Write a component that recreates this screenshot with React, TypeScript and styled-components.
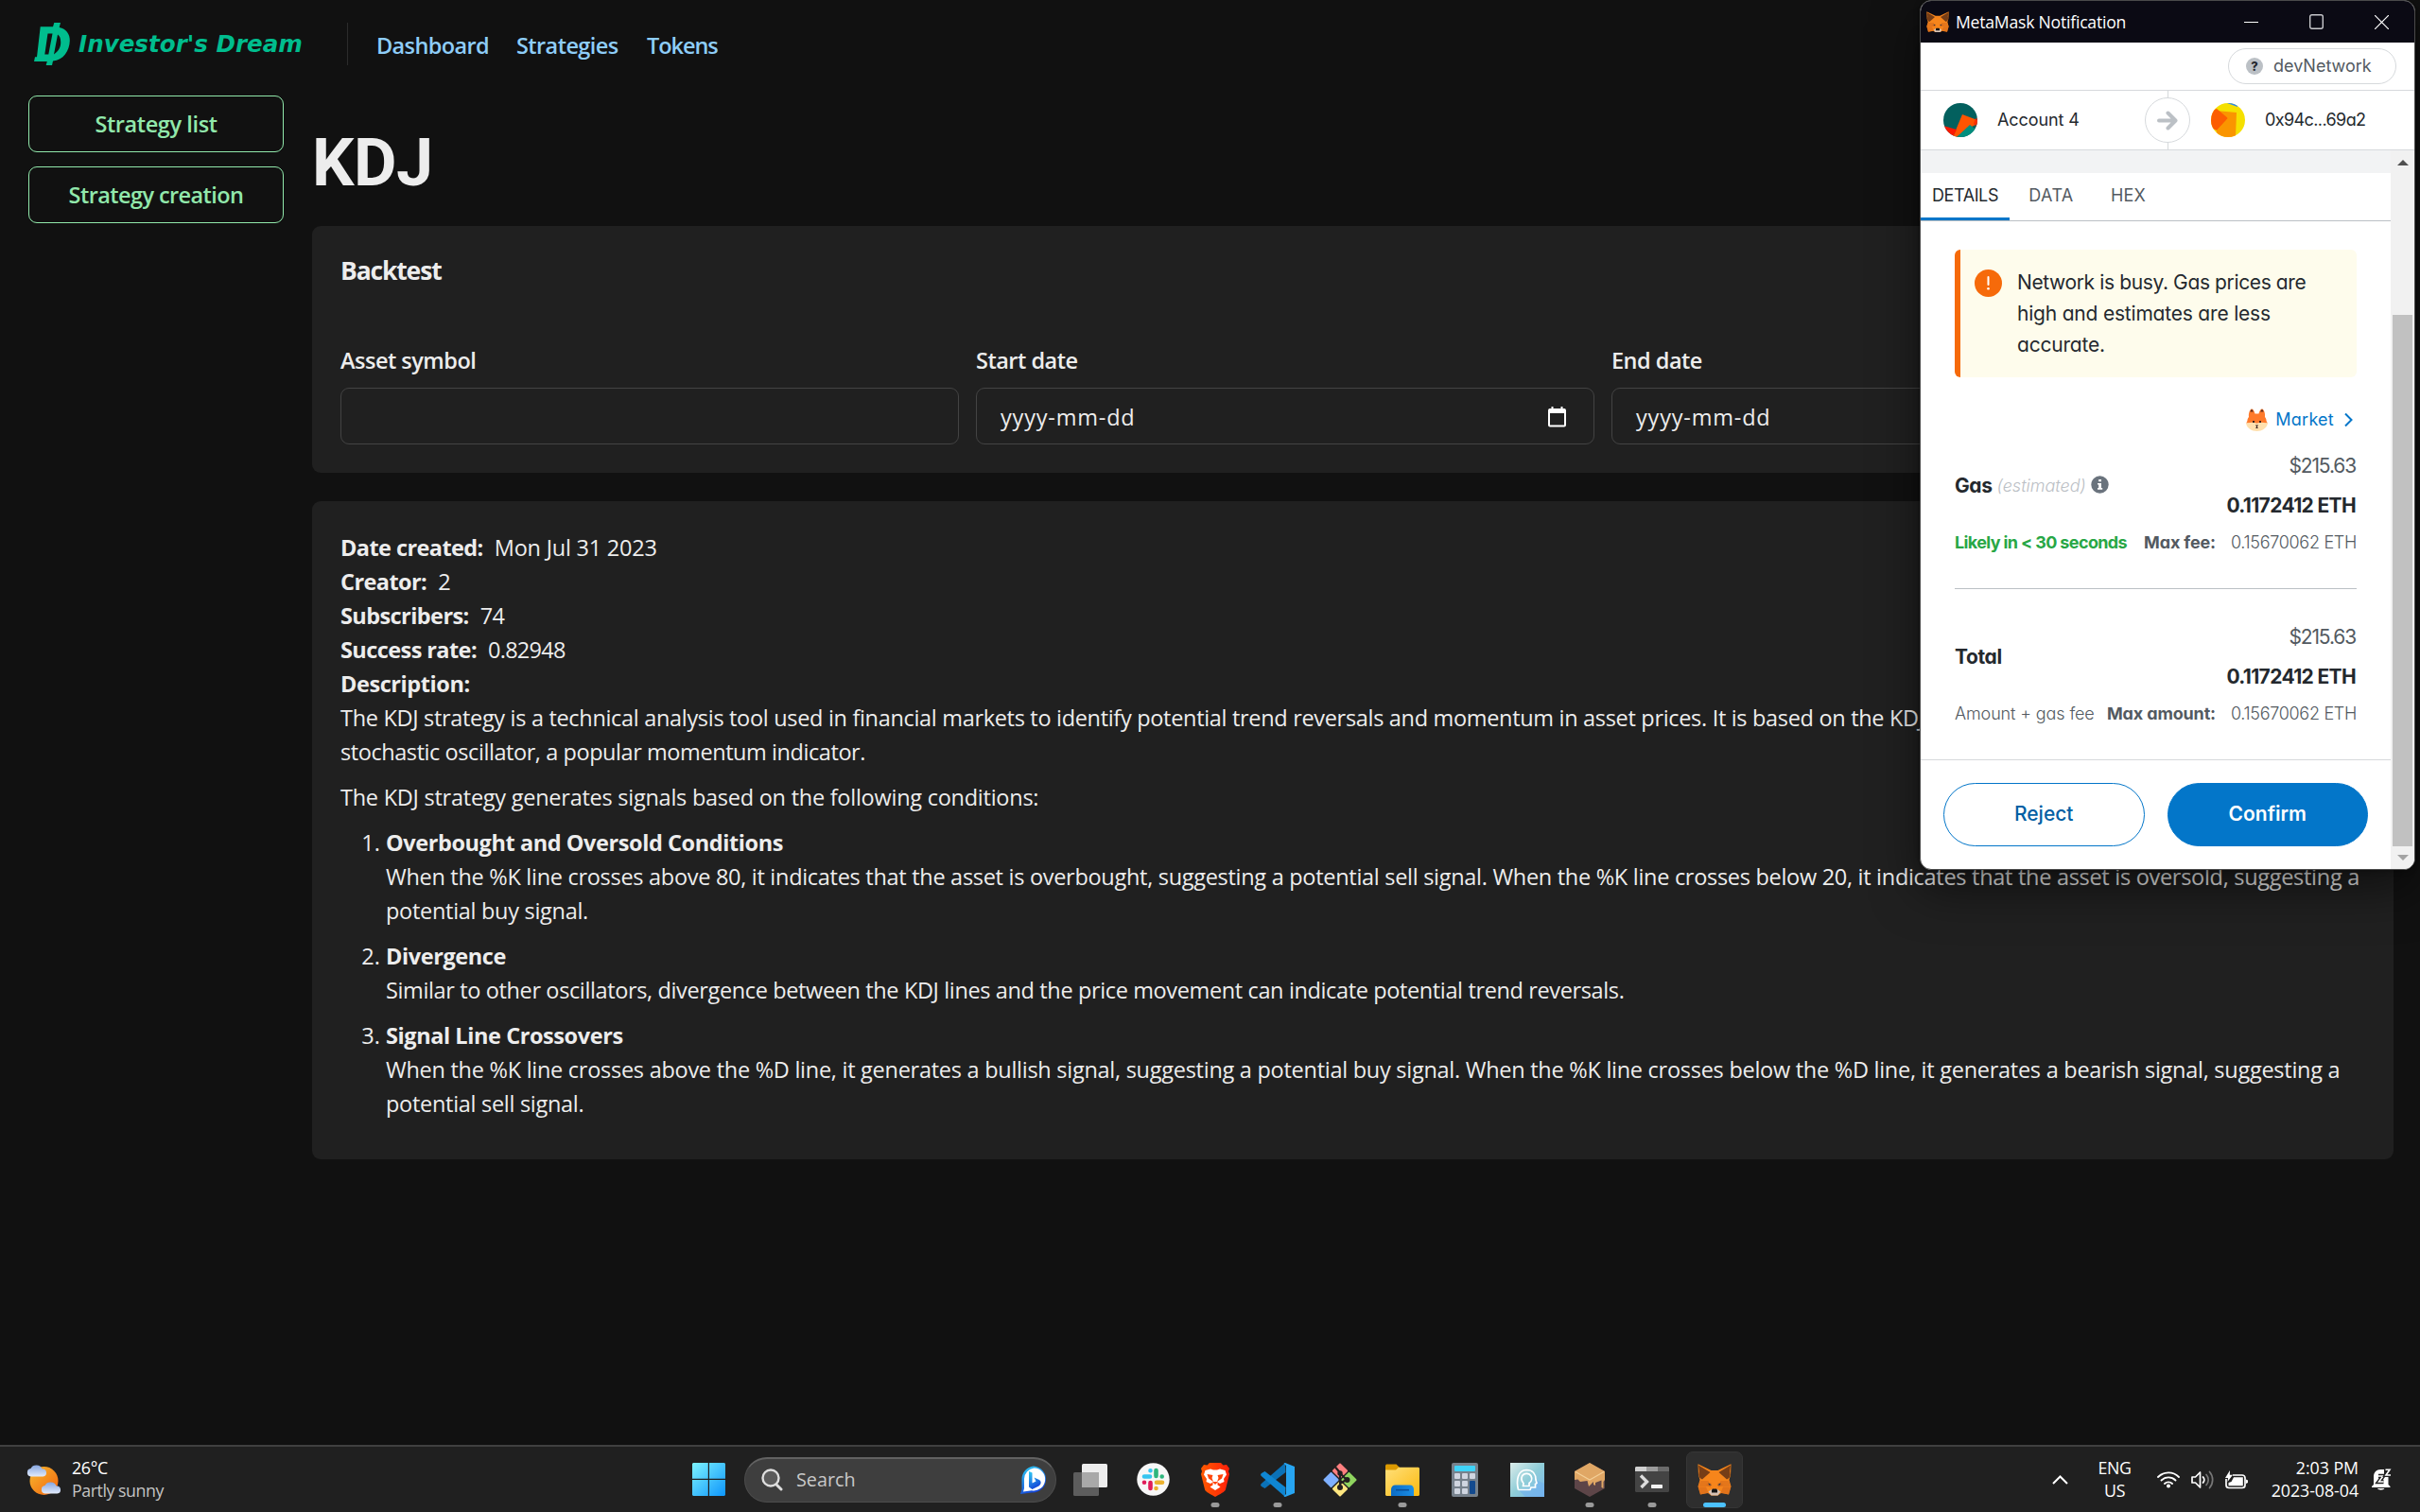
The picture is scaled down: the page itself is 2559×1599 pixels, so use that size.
import React from 'react';
import styled, { createGlobalStyle } from 'styled-components';

const SEGOE = "'Open Sans', 'Noto Sans', sans-serif";
const EUCLID = "Inter, 'Open Sans', sans-serif";

const GlobalStyle = createGlobalStyle`
  * { box-sizing: border-box; }
  html, body { margin: 0; padding: 0; background: #111111; }
  body { width: 2559px; height: 1599px; overflow: hidden; }
  button { font: inherit; cursor: pointer; }
`;

const Desktop = styled.div`
  position: relative;
  width: 2559px;
  height: 1599px;
  display: flex;
  flex-direction: column;
  overflow: hidden;
  background: #111111;
  color: #ededed;
  font-family: ${SEGOE};
  font-size: 23.5px;
  line-height: 36px;
`;

/* ---------- site ---------- */

const Site = styled.div`
  flex: 1;
  min-height: 0;
  display: flex;
  flex-direction: column;
`;

const Header = styled.header`
  height: 101px;
  padding: 24px 30px 0 36px;
  display: flex;
  align-items: flex-start;
`;

const Brand = styled.a`
  display: flex;
  align-items: center;
  height: 45px;
  width: 331px;
  gap: 9px;
  color: #00bd8e;
`;

const BrandName = styled.span`
  font: italic 700 24.6px/36px 'DejaVu Sans', Verdana, sans-serif;
  padding-top: 1px;
  white-space: nowrap;
`;

const Divider = styled.i`
  width: 1px;
  height: 45px;
  background: #2b2b2b;
`;

const Nav = styled.nav`
  display: flex;
  gap: 30px;
  padding: 6px 0 0 30px;
`;

const NavLink = styled.a<{ $track: number; $w: number }>`
  width: ${p => p.$w}px;
  color: #8ecdf8;
  font-weight: 600;
  white-space: nowrap;
  letter-spacing: ${p => p.$track}px;
`;

const Body = styled.div`
  display: flex;
  gap: 30px;
  padding: 0 28px 0 30px;
`;

const Sidebar = styled.aside`
  width: 270px;
  display: flex;
  flex-direction: column;
  gap: 15px;
`;

const SideButton = styled.button<{ $track: number }>`
  height: 60px;
  padding: 0 0 1px;
  border: 1.5px solid #91e8ab;
  border-radius: 9px;
  background: transparent;
  color: #91e8ab;
  font-weight: 600;
  letter-spacing: ${p => p.$track}px;
`;

const Main = styled.main`
  flex: 1;
  min-width: 0;
  padding-top: 26px;
`;

const Title = styled.h1`
  margin: 0 0 22px;
  font: 700 70px/90px Roboto, sans-serif;
  letter-spacing: -0.5px;
`;

const Card = styled.section<{ $pad: string }>`
  padding: ${p => p.$pad};
  border-radius: 9px;
  background: #202020;
  & + & { margin-top: 30px; }
`;

const CardTitle = styled.h2`
  margin: 0 0 57px;
  font-size: 26.5px;
  line-height: 40px;
  font-weight: 700;
  letter-spacing: -1.15px;
`;

const FormGrid = styled.div`
  display: grid;
  grid-template-columns: repeat(3, 654px) 1fr;
  column-gap: 18px;
`;

const Field = styled.label`
  display: flex;
  flex-direction: column;
  gap: 11px;
  font-weight: 600;
  letter-spacing: -0.5px;
`;

const Control = styled.span`
  height: 60px;
  padding: 2px 29px 0 25px;
  display: flex;
  align-items: center;
  justify-content: space-between;
  border: 1px solid #434343;
  border-radius: 9px;
  font-weight: 400;
  letter-spacing: 0.8px;
`;

const Row = styled.div`
  display: flex;
  gap: 12px;
`;

const Strong = styled.strong`
  font-weight: 700;
  letter-spacing: -0.42px;
`;

const FactName = styled(Strong)`
  letter-spacing: -0.58px;
`;

const Value = styled.span<{ $numeric?: boolean }>`
  letter-spacing: ${p => (p.$numeric ? -0.75 : -0.22)}px;
`;

const Para = styled.p`
  margin: 0 0 12px;
`;

const Rules = styled.ol`
  margin: 0;
  padding-left: 48px;
`;

const Rule = styled.li`
  margin-bottom: 12px;
`;

const Line = styled.div<{ $track?: number }>`
  white-space: nowrap;
  letter-spacing: ${p => p.$track ?? -0.29}px;
`;

/* ---------- wallet window ---------- */

const Window = styled.section`
  position: absolute;
  left: 2030px;
  top: 0;
  width: 524px;
  height: 920px;
  display: flex;
  flex-direction: column;
  overflow: hidden;
  border: 1px solid #4a4a4a;
  border-radius: 12px;
  background: #fff;
  color: #24292e;
  font-family: ${EUCLID};
  font-feature-settings: 'cv11';
  font-size: 18px;
`;

const WindowShadow = styled.div`
  position: absolute;
  left: 2030px;
  top: 0;
  width: 524px;
  height: 920px;
  border-radius: 12px;
  box-shadow: 0 20px 50px rgba(0, 0, 0, 0.5), 0 0 6px rgba(0, 0, 0, 0.4);
`;

const TitleBar = styled.div`
  height: 44px;
  flex: none;
  display: flex;
  align-items: center;
  padding: 0 27px 0 6px;
  background: #0b0a14;
  color: #fff;
  font: 400 17.6px/24px ${SEGOE};
  letter-spacing: -0.22px;
`;

const TitleText = styled.span`
  flex: 1;
  padding: 0 0 1px 7px;
`;

const Controls = styled.span`
  display: flex;
  align-items: center;
  gap: 54px;
`;

const NetworkBar = styled.div`
  height: 51px;
  flex: none;
  display: flex;
  justify-content: flex-end;
  align-items: center;
  padding: 0 19px 1px 0;
  border-bottom: 1px solid #d6d9dc;
`;

const NetworkPill = styled.div`
  height: 38px;
  width: 178px;
  display: flex;
  align-items: center;
  gap: 11px;
  padding-left: 18px;
  border: 1px solid #d6d9dc;
  border-radius: 19px;
  color: #535a61;
`;

const Question = styled.span`
  width: 18px;
  height: 18px;
  border-radius: 50%;
  display: grid;
  place-items: center;
  background: #bbc0c5;
  color: #24292e;
  font-size: 13px;
  font-weight: 800;
  line-height: 18px;
`;

const Accounts = styled.div`
  position: relative;
  height: 63px;
  flex: none;
  display: grid;
  grid-template-columns: 261px 1fr;
  border-bottom: 1px solid #d6d9dc;
`;

const Account = styled.div<{ $left: number; $track: number }>`
  display: flex;
  align-items: center;
  gap: 21px;
  padding-left: ${p => p.$left}px;
  letter-spacing: ${p => p.$track}px;
  & + & { border-left: 1px solid #d6d9dc; }
`;

const ArrowBadge = styled.span`
  position: absolute;
  left: 237px;
  top: 7px;
  width: 48px;
  height: 48px;
  display: grid;
  place-items: center;
  border: 1px solid #d6d9dc;
  border-radius: 50%;
  background: #fff;
`;

const Scroller = styled.div`
  flex: 1;
  display: flex;
  min-height: 0;
`;

const Pane = styled.div`
  width: 497px;
  display: flex;
  flex-direction: column;
`;

const Scrollbar = styled.div`
  width: 25px;
  display: flex;
  flex-direction: column;
  align-items: center;
  background: #f1f1f1;
`;

const ScrollArrow = styled.i<{ $down?: boolean }>`
  margin: ${p => (p.$down ? '9px 0 0' : '10px 0 158px')};
  border: 6px solid transparent;
  border-width: ${p => (p.$down ? '6px 6px 0' : '0 6px 6px')};
  border-${p => (p.$down ? 'top' : 'bottom')}-color: ${p => (p.$down ? '#a3a3a3' : '#505050')};
`;

const Thumb = styled.i`
  width: 21px;
  height: 562px;
  background: #c1c1c1;
`;

const Band = styled.div`
  height: 24px;
  background: #f2f3f4;
`;

const Tabs = styled.div`
  height: 51px;
  display: flex;
  border-bottom: 1px solid #bbc0c5;
`;

const Tab = styled.div<{ $active?: boolean; $w: number; $track: number }>`
  width: ${p => p.$w}px;
  display: flex;
  align-items: center;
  justify-content: center;
  border-bottom: 3px solid ${p => (p.$active ? '#0376c9' : 'transparent')};
  color: ${p => (p.$active ? '#24292e' : '#535a61')};
  letter-spacing: ${p => p.$track}px;
`;

const Details = styled.div`
  flex: 1;
  display: flex;
  flex-direction: column;
  padding: 30px 36px 0;
`;

const Alert = styled.div`
  height: 135px;
  display: flex;
  gap: 16px;
  padding: 18px 0 18px 15px;
  border-left: 6px solid #f66a0a;
  border-radius: 6px;
  background: #fefcec;
  font-size: 21px;
  line-height: 33px;
  white-space: nowrap;
`;

const AlertLine = styled.div<{ $track: number }>`
  letter-spacing: ${p => p.$track}px;
`;

const AlertMark = styled.span`
  width: 29px;
  height: 29px;
  margin-top: 3px;
  border-radius: 50%;
  display: grid;
  place-items: center;
  background: #f66a0a;
`;

const Market = styled.div`
  height: 36px;
  margin: 26px 0 17px;
  display: flex;
  align-items: center;
  justify-content: flex-end;
  gap: 8px;
  padding: 1px 4px 0 0;
  color: #0376c9;
  letter-spacing: 0.25px;
`;

const MarketName = styled.span`
  margin-right: 3px;
`;

const Amount = styled.div`
  height: 72px;
  display: flex;
  justify-content: space-between;
  align-items: center;
  font-size: 21px;
  line-height: 30px;
`;

const AmountName = styled.div`
  display: flex;
  align-items: center;
  gap: 5px;
  font-weight: 700;
  letter-spacing: -0.4px;
`;

const Estimated = styled.em`
  font-size: 18px;
  font-weight: 300;
  color: #bbc0c5;
  letter-spacing: 0;
`;

const Sums = styled.div`
  display: flex;
  flex-direction: column;
  align-items: flex-end;
  gap: 12px;
`;

const Fiat = styled.span`
  color: #535a61;
  letter-spacing: -1.15px;
  margin-right: 1px;
`;

const Eth = styled.strong`
  font-weight: 700;
  letter-spacing: -0.65px;
  margin-right: 1px;
`;

const Note = styled.div`
  height: 28px;
  margin-top: 10px;
  display: flex;
  align-items: center;
  justify-content: space-between;
  color: #535a61;
  font-weight: 300;
  white-space: nowrap;
`;

const NoteText = styled.span`
  letter-spacing: -0.12px;
`;

const Likely = styled.strong`
  color: #28a745;
  font-weight: 700;
  letter-spacing: -0.63px;
`;

const NoteMax = styled.span`
  display: flex;
  gap: 16px;
`;

const NoteLabel = styled.b`
  font-weight: 700;
  letter-spacing: -0.15px;
`;

const NoteValue = styled.span`
  letter-spacing: -0.3px;
`;

const Separator = styled.hr`
  width: 100%;
  margin: 34px 0 36px;
  border: 0;
  border-top: 1px solid #bbc0c5;
`;

const Footer = styled.div`
  height: 116px;
  display: grid;
  grid-template-columns: 1fr 1fr;
  gap: 24px;
  padding: 24px 24px 24px;
  border-top: 1px solid #d6d9dc;
`;

const Pill = styled.button<{ $primary?: boolean }>`
  height: 67px;
  padding: 0 0 1px;
  border: 1px solid #0376c9;
  border-radius: 34px;
  background: ${p => (p.$primary ? '#0376c9' : '#fff')};
  color: ${p => (p.$primary ? '#fff' : '#0260a4')};
  font-size: 21px;
  font-weight: ${p => (p.$primary ? 600 : 500)};
`;

/* ---------- taskbar ---------- */

const Taskbar = styled.footer`
  height: 71px;
  display: grid;
  grid-template-columns: 732px auto 1fr;
  align-items: center;
  border-top: 2px solid #404040;
  background: #202020;
  color: #fff;
  font-size: 17.8px;
  line-height: 24px;
`;

const Weather = styled.div`
  display: flex;
  align-items: center;
  gap: 11px;
  padding-left: 28px;
`;

const Stack = styled.div<{ $align: string; $track?: number }>`
  display: flex;
  flex-direction: column;
  margin-top: -2px;
  text-align: ${p => p.$align};
  letter-spacing: ${p => p.$track ?? -0.3}px;
`;

const Muted = styled.span`
  color: #c4c4c4;
  letter-spacing: -0.45px;
`;

const Apps = styled.div`
  display: flex;
  align-items: center;
`;

const Search = styled.div`
  width: 330px;
  height: 48px;
  margin: 0 6px 0 20px;
  padding: 0 8px 1px 16px;
  display: flex;
  align-items: center;
  gap: 14px;
  border: 1px solid #4c4c4c;
  border-top: 2px solid #626262;
  border-radius: 24px;
  background: #3e3e3e;
  color: #c8c8c8;
  font-size: 19.8px;
`;

const SearchText = styled.span`
  flex: 1;
`;

const Tiles = styled.div`
  display: flex;
  gap: 6px;
`;

const Tile = styled.div<{ $active?: boolean }>`
  position: relative;
  width: 60px;
  height: 60px;
  display: grid;
  place-items: center;
  border-radius: 7px;
  border: 1px solid ${p => (p.$active ? '#363636' : 'transparent')};
  background: ${p => (p.$active ? '#2e2e2e' : 'transparent')};
`;

const Indicator = styled.i<{ $active?: boolean }>`
  position: absolute;
  bottom: 0;
  left: 50%;
  width: ${p => (p.$active ? 24 : 9)}px;
  height: 5px;
  transform: translateX(-50%);
  border-radius: 3px;
  background: ${p => (p.$active ? '#4cc2ff' : '#9a9a9a')};
`;

const Tray = styled.div`
  display: flex;
  align-items: center;
  justify-content: flex-end;
  padding-right: 30px;
`;

const Language = styled.div`
  margin: 0 27px 0 31px;
`;

const Status = styled.div`
  display: flex;
  align-items: center;
  gap: 12px;
  margin-right: 25px;
`;

const Clock = styled.div`
  margin-right: 14px;
`;

/* ---------- drawings ---------- */

const BrandMark = () => (
  <svg width="38" height="45" viewBox="0 0 38 45" fill="none">
    <path fill="#00bd8e" fillRule="evenodd" d="M6.7 4.3H20L21.300 0H28L26.700 5C34 6.500 38 12 37.800 19C37.500 30 31 39.500 20 40.500L19 45H12.700L13.800 41H0L1 36.200H3L6.700 4.300ZM14.500 11.500L11.300 33.600H15.300L19.500 11.500ZM25 12.500L21 33.500C26.500 30 28.500 25 28.200 20C28 16 27 13.800 25 12.500Z" />
  </svg>
);

const CalendarGlyph = () => (
  <svg width="19" height="22" viewBox="0 0 19 22">
    <path d="M4.500 0V4M14.500 0V4" stroke="#fff" strokeWidth="2" />
    <rect x="1" y="3" width="17" height="17.500" rx="1" fill="none" stroke="#fff" strokeWidth="2" />
    <path d="M1 2.500H18V7H1Z" fill="#fff" />
  </svg>
);

const Fox = ({ size }: { size: number }) => (
  <svg width={size} height={(size * 34) / 36} viewBox="0 0 36 34">
    <path fill="#f6851b" d="M.5 .3L14.500 7H21.500L35.500 .3L35 12L33.500 17L35.500 24L33 32.500L25 31L21.500 33.500H14.500L11 31L3 32.500L.5 24L2.500 17L1 12Z" />
    <path fill="#763d16" d="M1 1.500L13.500 9L5 16.500L2.500 15L1.300 12L1.800 8Z M35 1.500L22.500 9L31 16.500L33.500 15L34.700 12L34.200 8Z" />
    <path fill="#e4761b" d="M3 18L11.500 18L14 24L.7 24Z M33 18L24.500 18L22 24L35.300 24Z" />
    <path fill="#d5671a" d="M8.500 22L14.500 20L14 25Z M27.500 22L21.500 20L22 25Z M.7 24.500H9L11.500 30.500L3 32.500Z M35.300 24.500H27L24.500 30.500L33 32.500Z" opacity=".6" />
    <path fill="#233447" d="M11.500 20.300L15 22.500L12 22.500Z M24.500 20.300L21 22.500L24 22.500Z" />
    <path fill="#d7c1b3" d="M11.500 29.500L15 27H21L24.500 29.500L21.500 33.500H14.500Z" />
    <path fill="#161616" d="M15 27.500L16 26.500H20L21 27.500V30.500H15Z" />
  </svg>
);

const FoxFace = () => (
  <svg width="23" height="24" viewBox="0 0 23 24">
    <path fill="#ff7a2b" d="M1.500 15.500C1 12 2 10 3 9C2.500 5 4 1 6 .5C8 .5 9 4 9.500 5.500H13.500C14 4 15 .5 17 .5C19 1 20.500 5 20 9C21 10 22 12 21.500 15.500Z" />
    <path fill="#5c2f22" d="M4.300 3.500L6 .5L8 3.500Z M15 3.500L17 .5L18.700 3.500Z" />
    <path fill="#ff7a2b" d="M0 15.500L2 13H21L23 15.500Z" />
    <path fill="#ffe0ae" d="M0 15.500L8 14.500L11.500 16L15 14.500L23 15.500C22 21 17 24 11.500 24S1 21 0 15.500Z" />
    <path fill="#3a2420" d="M7 13H9V15H7ZM14 13H16V15H14ZM10 17.500H13L11.800 19.500L13 21H10L11.200 19.500Z" />
  </svg>
);

const Jazz = ({ base, children }: { base: string; children: React.ReactNode }) => (
  <svg width="36" height="36" viewBox="0 0 36 36">
    <clipPath id={'j' + base.slice(1)}><circle cx="18" cy="18" r="18" /></clipPath>
    <g clipPath={`url(#j${base.slice(1)})`}>
      <rect width="36" height="36" fill={base} />
      {children}
    </g>
  </svg>
);

const WindowsLogo = () => (
  <svg width="35" height="35" viewBox="0 0 35 35">
    <defs>
      <linearGradient id="win" gradientUnits="userSpaceOnUse" x1="0" y1="0" x2="35" y2="35">
        <stop stopColor="#7df3ff" /><stop offset="1" stopColor="#0d95fb" />
      </linearGradient>
    </defs>
    <path fill="url(#win)" d="M1 0H16.800V16.800H0V1ZM18 0H34L35 1V16.800H18ZM0 18H16.800V35H1L0 34ZM18 18H35V34L34 35H18Z" />
  </svg>
);

const SearchGlyph = () => (
  <svg width="24" height="24" viewBox="0 0 24 24" fill="none" stroke="#dedede" strokeLinecap="round">
    <circle cx="11" cy="10" r="8.500" fill="#5b5b5b" strokeWidth="2.400" />
    <path d="M17 17L22 22" strokeWidth="3" />
  </svg>
);

const Bing = () => (
  <svg width="30" height="30" viewBox="0 0 30 30">
    <defs>
      <linearGradient id="bing" x1="0" y1="0" x2=".4" y2="1">
        <stop stopColor="#2fd0f5" /><stop offset="1" stopColor="#1546d8" />
      </linearGradient>
    </defs>
    <path fill="url(#bing)" d="M15 .5A14 14 0 1 1 13 28.500L1 30L2.500 25V14.500A14 14 0 0 1 15 .5Z" />
    <path fill="#fff" d="M15.500 2.500A12 12 0 1 1 13 26.300L4 27.500L5 24V14A12 12 0 0 1 15.500 2.500Z" />
    <path fill="url(#bing)" d="M10 6L13.500 7.500V18.500L17.500 16.500L15.500 12.500L21 15C23.500 16.500 23 20 20.500 21.500L13.500 25L10 22.500Z" />
  </svg>
);

const TaskView = () => (
  <svg width="36" height="34" viewBox="0 0 36 34">
    <rect x="9" y="0" width="27" height="25" rx="1.500" fill="#ededed" />
    <rect x="0" y="9" width="27" height="25" rx="1.500" fill="#5d5d5d" />
    <rect x="9" y="9" width="18" height="16" fill="#a9a9a9" />
  </svg>
);

const Slack = () => (
  <svg width="35" height="35" viewBox="0 0 35 35" strokeWidth="4.600" strokeLinecap="round">
    <circle cx="17.500" cy="17.500" r="17.200" fill="#f7f7f7" />
    <path d="M8 14.500H14M14.500 8.300V8.300" stroke="#36c5f0" />
    <path d="M20.500 8V14M26.700 14.500V14.500" stroke="#2eb67d" />
    <path d="M27 20.800H21M20.500 27V27" stroke="#ecb22e" />
    <path d="M14.500 27V21M8 20.800V20.800" stroke="#e01e5a" />
  </svg>
);

const Brave = () => (
  <svg width="30" height="36" viewBox="0 0 30 36">
    <defs>
      <linearGradient id="brave" x1="0" y1="0" x2="1" y2="0">
        <stop stopColor="#ff5a00" /><stop offset="1" stopColor="#ff1f0a" />
      </linearGradient>
    </defs>
    <path fill="url(#brave)" d="M9 0H21L23.500 2.500L27 2L30 6L29 9L30 12L26 28C25.500 30 24 31 15 36C6 31 4.500 30 4 28L0 12L1 9L0 6L3 2L6.500 2.500Z" />
    <path fill="#fff" d="M4.500 8L10 6.500L13 7.500H17L20 6.500L25.500 8L27 12.500L24 17L24.500 20L20 22L17.500 20.500V23.500L20.500 25.500L15 29L9.500 25.500L12.500 23.500V20.500L10 22L5.500 20L6 17L3 12.500Z" />
    <path fill="#ff4509" d="M6.500 12L12.500 13L11.500 16L13 20L8 16.500Z M23.500 12L17.500 13L18.500 16L17 20L22 16.500Z M12 20H18L15 23Z" />
  </svg>
);

const VsCode = () => (
  <svg width="36" height="36" viewBox="0 0 36 36">
    <path fill="#0b72b8" d="M26 0L26.500 10L4.500 27L1 25C-.2 24-.2 23 .8 22Z" />
    <path fill="#0f86d2" d="M26 36L26.500 26L4.500 9L1 11C-.2 12-.2 13 .8 14Z" />
    <path fill="#27a5f2" d="M26 0L36 4V32L26 36L24.500 35.500L27 33V3L24.500 .5Z" />
  </svg>
);

const Git = () => (
  <svg width="36" height="36" viewBox="0 0 36 36">
    <g transform="rotate(45 18 18)">
      <rect x="5.300" y="5.300" width="12" height="12" rx="1" fill="#ff7f7f" />
      <rect x="18.700" y="5.300" width="12" height="12" rx="1" fill="#8fd45f" />
      <rect x="5.300" y="18.700" width="12" height="12" rx="1" fill="#7fb0ff" />
      <rect x="18.700" y="18.700" width="12" height="12" rx="1" fill="#ffe680" />
    </g>
    <path d="M13 4.500L18 10.500V26M18 11L25 18M18 22L24.500 18" stroke="#231f20" strokeWidth="2.200" fill="none" />
    <g fill="#231f20"><circle cx="18" cy="11" r="2.700" /><circle cx="25.500" cy="18" r="3" /><circle cx="18" cy="26" r="3" /></g>
  </svg>
);

const Explorer = () => (
  <svg width="36" height="34" viewBox="0 0 36 34">
    <defs>
      <linearGradient id="fold" x1="0" y1="0" x2="1" y2="1">
        <stop stopColor="#ffe07a" /><stop offset="1" stopColor="#fcb90f" />
      </linearGradient>
      <linearGradient id="dock" x1="0" y1="0" x2="1" y2="0">
        <stop stopColor="#0c6cc4" /><stop offset="1" stopColor="#1a8ee6" />
      </linearGradient>
    </defs>
    <path fill="#dc9a00" d="M0 1.500L1 .5H11.500L15 4V9H0Z" />
    <path fill="url(#fold)" d="M0 6.500H11L14 3.800H35L36 4.800V33L35 34H1L0 33Z" />
    <path fill="url(#dock)" d="M6 34V27C6 24.500 8 22.500 10.500 22.500H26C28.500 22.500 30 24.500 30 27V34Z" />
    <path stroke="#0a4f99" strokeWidth="1.600" d="M11 27.700H25" />
  </svg>
);

const Calculator = () => (
  <svg width="28" height="36" viewBox="0 0 28 36">
    <rect width="28" height="36" rx="2" fill="#76818c" />
    <rect x="3" y="3" width="22" height="6" rx="1" fill="#3fd3f8" />
    <g fill="#cfd5e0">
      {[11, 19, 27].map(y => [3, 11].map(x => <rect key={x + '-' + y} x={x} y={y} width="6" height="6" rx="1" />))}
      <rect x="19" y="11" width="6" height="6" rx="1" />
    </g>
    <rect x="19" y="19" width="6" height="14" rx="1" fill="#134a8e" />
  </svg>
);

const HeadApp = () => (
  <svg width="36" height="36" viewBox="0 0 36 36">
    <defs>
      <linearGradient id="head" x1="0" y1="0" x2="1" y2="1">
        <stop stopColor="#dcecea" /><stop offset=".5" stopColor="#8fcdd8" /><stop offset="1" stopColor="#78b6ee" />
      </linearGradient>
    </defs>
    <rect width="36" height="36" fill="url(#head)" />
    <path fill="#6fb0ee" opacity=".6" d="M8 28L16 36H36V22L27 18V27Z" />
    <g fill="none" stroke="#fff" strokeWidth="1.700">
      <path d="M8.500 28.500C6 18 8 8 17 7.500C24 7.500 27 12 27 18L28 21.500L26.500 22.500V26H22L21 28.500H8.500" />
      <path d="M13.500 24.500H20V21.500C23 19.500 23 16 22 14C20 10.500 14.500 10.500 12.500 14C11.500 16.500 12 19.500 14 21.500Z" />
    </g>
  </svg>
);

const Cube = () => (
  <svg width="32" height="36" viewBox="0 0 32 36">
    <path fill="#5d4548" d="M16 0L32 9V27L16 36L0 27V9Z" />
    <path fill="#e0a765" d="M16 0L32 9V18L30.500 20V27L28.500 26V18.500L22 21V24L20 23V20L15 25L13.500 19L6 20L3.500 17.500L0 18V9Z" />
    <path fill="none" stroke="#f3cf97" strokeWidth="1.200" d="M1 9.500L16 18L31 9.500" />
  </svg>
);

const Terminal = () => (
  <svg width="36" height="28" viewBox="0 0 36 28">
    <rect width="36" height="27" rx="1.500" fill="#444" />
    <path fill="#d0d0d0" d="M0 1L1 0H12V5H0Z" /><path fill="#9b9b9b" d="M12 0H24V5H12Z" /><path fill="#6a6a6a" d="M24 0H35L36 1V5H24Z" />
    <path d="M6 9.500L12.500 16L6.500 22" fill="none" stroke="#dcdcdc" strokeWidth="3.400" />
    <rect x="17" y="19" width="12" height="4" rx=".8" fill="#f2f2f2" />
  </svg>
);

const SunClouds = () => (
  <svg width="37" height="34" viewBox="0 0 37 34">
    <defs>
      <linearGradient id="sun" x1="0" y1="0" x2="1" y2="1"><stop stopColor="#f7b92f" /><stop offset="1" stopColor="#f2640e" /></linearGradient>
      <linearGradient id="cloud" x1="0" y1="0" x2="0" y2="1"><stop stopColor="#86a6e0" /><stop offset="1" stopColor="#e2ebfb" /></linearGradient>
    </defs>
    <circle cx="18.500" cy="18" r="15" fill="url(#sun)" />
    <path fill="url(#cloud)" d="M4.500 13.500A4.300 4.300 0 0 1 4.500 5A6.500 6 0 0 1 16.500 5.500A4 4 0 0 1 17.500 13.500Z" />
    <path fill="url(#cloud)" d="M19.500 31.500A4.300 4.300 0 0 1 19.500 23A6.500 6 0 0 1 31.500 23.500A4 4 0 0 1 32.500 31.500Z" />
  </svg>
);

const Wifi = () => (
  <svg width="24" height="19" viewBox="0 0 24 19" fill="none" stroke="#fff" strokeWidth="1.800" strokeLinecap="round">
    <path d="M1 7A15.500 15.500 0 0 1 23 7M4.500 10.500A10.700 10.700 0 0 1 19.500 10.500M8 14A5.700 5.700 0 0 1 16 14" />
    <circle cx="12" cy="16.500" r="1.300" fill="#fff" strokeWidth="1.400" />
  </svg>
);

const Volume = () => (
  <svg width="24" height="20" viewBox="0 0 24 20" fill="none" strokeLinecap="round" strokeWidth="1.700">
    <path stroke="#fff" strokeLinejoin="round" d="M1 7H4.500L9.500 2V18L4.500 13H1ZM12.500 7A4 4 0 0 1 12.500 13" />
    <path stroke="#777" d="M16 4.500A8 8 0 0 1 16 15.500M19.500 1.500A13 13 0 0 1 19.500 18.500" />
  </svg>
);

const Battery = () => (
  <svg width="24" height="20" viewBox="0 0 24 20">
    <path d="M1 9V15.500A3 3 0 0 0 4 18.500H18A3 3 0 0 0 21 15.500V8A3 3 0 0 0 18 5H8" fill="none" stroke="#fff" strokeWidth="1.700" />
    <path fill="#fff" d="M9 7.200H18.800V16.200H3.500V13L6.500 12ZM22 9.500L24 10.500V13L22 14ZM5 0L0 8H3L2.500 12L8 4.800H4.800Z" />
  </svg>
);

const Bell = () => (
  <svg width="21" height="23" viewBox="0 0 21 23">
    <path fill="#fff" d="M2 17V8.500C2 4 5 1 9.500 1H13V8H17.500V17L19.500 19V20H0V19ZM6 21H13.500C12.500 23.200 7 23.200 6 21Z" />
    <path fill="none" stroke="#202020" strokeWidth="4.400" d="M7 8H12L7.500 14H12.500" />
    <path fill="none" stroke="#fff" strokeWidth="1.500" d="M7 8H12L7.500 14H12.500" />
    <path fill="none" stroke="#202020" strokeWidth="4" d="M14.500 1.200H19L15 7H20" />
    <path fill="none" stroke="#fff" strokeWidth="1.600" d="M14.500 1.200H19L15 7H20" />
  </svg>
);

const apps: { key: string; icon: React.ReactNode; state?: 'open' | 'active' }[] = [
  { key: 'taskview', icon: <TaskView /> },
  { key: 'slack', icon: <Slack /> },
  { key: 'brave', icon: <Brave />, state: 'open' },
  { key: 'code', icon: <VsCode />, state: 'open' },
  { key: 'git', icon: <Git /> },
  { key: 'explorer', icon: <Explorer />, state: 'open' },
  { key: 'calculator', icon: <Calculator /> },
  { key: 'head', icon: <HeadApp /> },
  { key: 'cube', icon: <Cube />, state: 'open' },
  { key: 'terminal', icon: <Terminal />, state: 'open' },
  { key: 'metamask', icon: <Fox size={36} />, state: 'active' },
];

const facts: { name: string; value: string; numeric?: boolean }[] = [
  { name: 'Date created:', value: 'Mon Jul 31 2023' },
  { name: 'Creator:', value: '2' },
  { name: 'Subscribers:', value: '74', numeric: true },
  { name: 'Success rate:', value: '0.82948', numeric: true },
];

export default function App() {
  return (
    <Desktop>
      <GlobalStyle />
      <Site>
        <Header>
          <Brand>
            <BrandMark />
            <BrandName>Investor's Dream</BrandName>
          </Brand>
          <Divider />
          <Nav>
            <NavLink $track={-0.62} $w={118}>Dashboard</NavLink>
            <NavLink $track={-0.58} $w={108}>Strategies</NavLink>
            <NavLink $track={-1.05} $w={80}>Tokens</NavLink>
          </Nav>
        </Header>
        <Body>
          <Sidebar>
            <SideButton $track={-0.4}>Strategy list</SideButton>
            <SideButton $track={-0.58}>Strategy creation</SideButton>
          </Sidebar>
          <Main>
            <Title>KDJ</Title>
            <Card $pad="27px 30px 30px">
              <CardTitle>Backtest</CardTitle>
              <FormGrid>
                <Field>Asset symbol<Control /></Field>
                <Field>Start date<Control>yyyy-mm-dd<CalendarGlyph /></Control></Field>
                <Field>End date<Control>yyyy-mm-dd</Control></Field>
              </FormGrid>
            </Card>
            <Card $pad="31px 30px 29px">
              {facts.map(f => (
                <Row key={f.name}><FactName>{f.name}</FactName><Value $numeric={f.numeric}>{f.value}</Value></Row>
              ))}
              <Strong>Description:</Strong>
              <Para>
                <Line $track={-0.315}>The KDJ strategy is a technical analysis tool used in financial markets to identify potential trend reversals and momentum in asset prices. It is based on the KDJ</Line>
                <Line $track={-0.43}>stochastic oscillator, a popular momentum indicator.</Line>
              </Para>
              <Para><Line $track={-0.25}>The KDJ strategy generates signals based on the following conditions:</Line></Para>
              <Rules>
                <Rule>
                  <Strong>Overbought and Oversold Conditions</Strong>
                  <Line>When the %K line crosses above 80, it indicates that the asset is overbought, suggesting a potential sell signal. When the %K line crosses below 20, it indicates that the asset is oversold, suggesting a</Line>
                  <Line>potential buy signal.</Line>
                </Rule>
                <Rule>
                  <Strong>Divergence</Strong>
                  <Line $track={-0.37}>Similar to other oscillators, divergence between the KDJ lines and the price movement can indicate potential trend reversals.</Line>
                </Rule>
                <Rule>
                  <Strong>Signal Line Crossovers</Strong>
                  <Line $track={-0.267}>When the %K line crosses above the %D line, it generates a bullish signal, suggesting a potential buy signal. When the %K line crosses below the %D line, it generates a bearish signal, suggesting a</Line>
                  <Line>potential sell signal.</Line>
                </Rule>
              </Rules>
            </Card>
          </Main>
        </Body>
      </Site>

      <Taskbar>
        <Weather>
          <SunClouds />
          <Stack $align="left"><span>26°C</span><Muted>Partly sunny</Muted></Stack>
        </Weather>
        <Apps>
          <WindowsLogo />
          <Search><SearchGlyph /><SearchText>Search</SearchText><Bing /></Search>
          <Tiles>
            {apps.map(a => (
              <Tile key={a.key} $active={a.state === 'active'}>
                {a.icon}
                {a.state && <Indicator $active={a.state === 'active'} />}
              </Tile>
            ))}
          </Tiles>
        </Apps>
        <Tray>
          <svg width="17" height="10" viewBox="0 0 17 10" fill="none" stroke="#fff" strokeWidth="2"><path d="M1 9L8.500 1.500L16 9" /></svg>
          <Language><Stack $align="center"><span>ENG</span><span>US</span></Stack></Language>
          <Status><Wifi /><Volume /><Battery /></Status>
          <Clock><Stack $align="right" $track={-0.05}><span>2:03 PM</span><span>2023-08-04</span></Stack></Clock>
          <Bell />
        </Tray>
      </Taskbar>

      <WindowShadow />
      <Window>
        <TitleBar>
          <Fox size={24} />
          <TitleText>MetaMask Notification</TitleText>
          <Controls>
            <svg width="15" height="15"><path d="M0 7.500H15" stroke="#fff" /></svg>
            <svg width="15" height="16" fill="none"><rect x=".7" y=".7" width="13.600" height="14.600" rx="2" stroke="#c8c8cc" strokeWidth="1.400" /></svg>
            <svg width="15" height="15"><path d="M0 0L15 15M15 0L0 15" stroke="#fff" strokeWidth="1.200" /></svg>
          </Controls>
        </TitleBar>
        <NetworkBar>
          <NetworkPill><Question>?</Question>devNetwork</NetworkPill>
        </NetworkBar>
        <Accounts>
          <Account $left={24} $track={-0.1}>
            <Jazz base="#03605e">
              <path fill="#ff5401" d="M20 12L36 18V22L24 28L14 36H10Z" />
              <path fill="#fb1801" d="M0 24L14 28L10 36H0Z" />
              <path fill="#018e7e" d="M14 36L28 23L34 28L30 36Z" />
              <path fill="#fb1801" d="M34 16L36 16V26L32 22Z" opacity=".6" />
            </Jazz>
            Account 4
          </Account>
          <Account $left={45} $track={-0.6}>
            <Jazz base="#f5e000">
              <path fill="#fa9500" d="M5 8L27 10L26 36H5L6 29L18 16Z" />
              <path fill="#fc5d01" d="M0 8L6 6L18 16L6 29L0 26Z" />
              <path fill="#2a86f3" d="M17 0L28 4V0Z" />
            </Jazz>
            0x94c...69a2
          </Account>
          <ArrowBadge>
            <svg width="22" height="21" viewBox="0 0 22 21" fill="none" stroke="#bbc0c5" strokeWidth="4" strokeLinecap="round" strokeLinejoin="round">
              <path d="M2 10.500H19M11.500 2.500L19.500 10.500L11.500 18.500" />
            </svg>
          </ArrowBadge>
        </Accounts>
        <Scroller>
          <Pane>
            <Band />
            <Tabs>
              <Tab $active $w={94} $track={-0.4}>DETAILS</Tab>
              <Tab $w={88} $track={0.4}>DATA</Tab>
              <Tab $w={75} $track={0.2}>HEX</Tab>
            </Tabs>
            <Details>
              <Alert>
                <AlertMark>
                  <svg width="5" height="15" viewBox="0 0 5 15" fill="#fff"><rect x="1.500" width="2" height="10" rx="1" /><circle cx="2.500" cy="13.300" r="1.300" /></svg>
                </AlertMark>
                <div>
                  <AlertLine $track={-0.38}>Network is busy. Gas prices are</AlertLine>
                  <AlertLine $track={-0.2}>high and estimates are less</AlertLine>
                  <AlertLine $track={-0.2}>accurate.</AlertLine>
                </div>
              </Alert>
              <Market>
                <FoxFace />
                <MarketName>Market</MarketName>
                <svg width="9" height="16" viewBox="4 0 9 16" fill="none" stroke="#0376c9" strokeWidth="2"><path d="M5 1.500L11.500 8L5 14.500" /></svg>
              </Market>
              <Amount>
                <AmountName>
                  Gas <Estimated>(estimated)</Estimated>
                  <svg width="19" height="22" viewBox="0 0 19 22"><circle cx="9.500" cy="9.500" r="9.200" fill="#6a737d" /><path fill="#fff" d="M8.200 4H11V6.300H8.200ZM7 8H11V13H12.200V14.700H7V13H8.200V9.600H7Z" /></svg>
                </AmountName>
                <Sums><Fiat>$215.63</Fiat><Eth>0.1172412 ETH</Eth></Sums>
              </Amount>
              <Note>
                <Likely>Likely in &lt; 30 seconds</Likely>
                <NoteMax><NoteLabel>Max fee:</NoteLabel><NoteValue>0.15670062 ETH</NoteValue></NoteMax>
              </Note>
              <Separator />
              <Amount>
                <AmountName>Total</AmountName>
                <Sums><Fiat>$215.63</Fiat><Eth>0.1172412 ETH</Eth></Sums>
              </Amount>
              <Note>
                <NoteText>Amount + gas fee</NoteText>
                <NoteMax><NoteLabel>Max amount:</NoteLabel><NoteValue>0.15670062 ETH</NoteValue></NoteMax>
              </Note>
            </Details>
            <Footer>
              <Pill>Reject</Pill>
              <Pill $primary>Confirm</Pill>
            </Footer>
          </Pane>
          <Scrollbar>
            <ScrollArrow />
            <Thumb />
            <ScrollArrow $down />
          </Scrollbar>
        </Scroller>
      </Window>
    </Desktop>
  );
}
